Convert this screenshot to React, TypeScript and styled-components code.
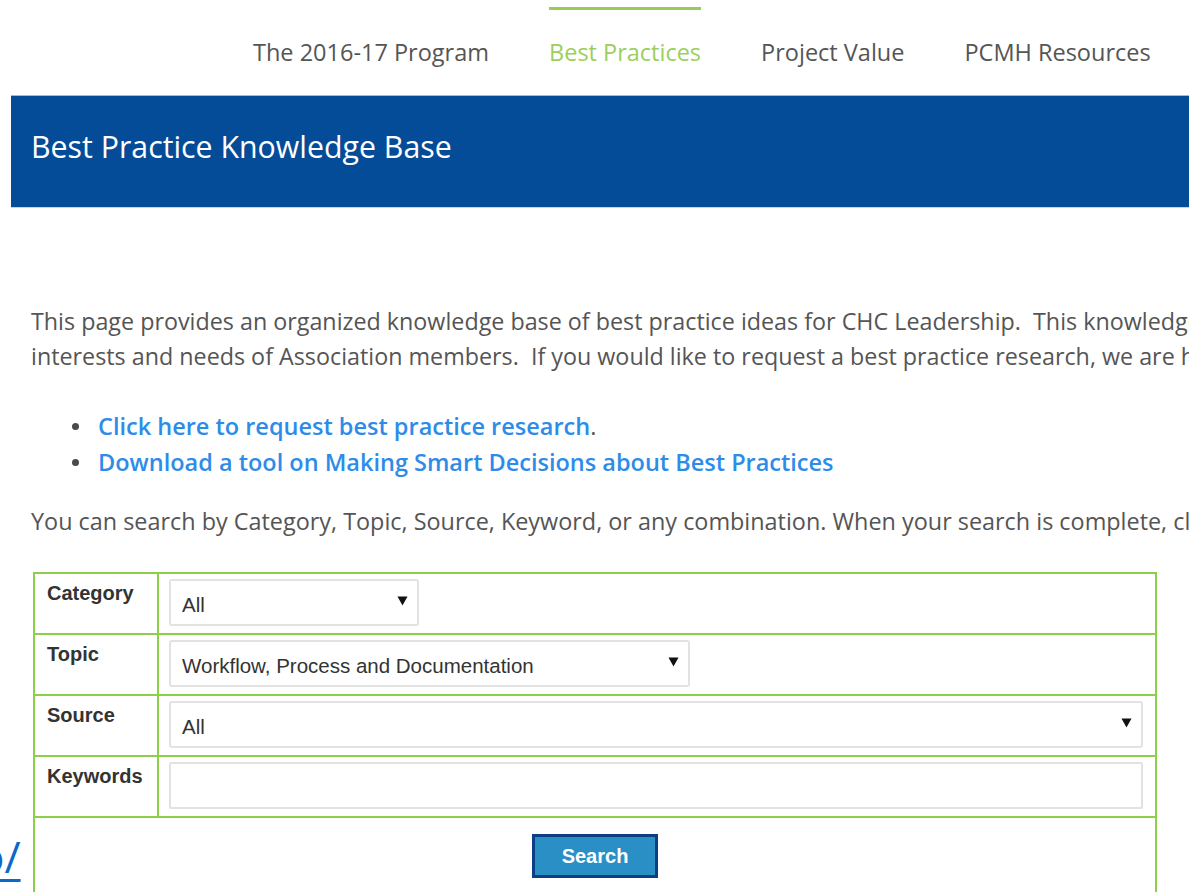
import React from "react";
import styled, { createGlobalStyle } from "styled-components";

const Global = createGlobalStyle`
  html, body {
    margin: 0;
    padding: 0;
    background: #ffffff;
    overflow: hidden;
  }
  body {
    font-family: "Open Sans", "Noto Sans", sans-serif;
    color: #555555;
  }
  * { box-sizing: border-box; }
`;

const Page = styled.div`
  position: relative;
  width: 1189px;
  height: 892px;
  overflow: hidden;
`;

const Nav = styled.nav`
  display: flex;
  gap: 60px;
  padding-left: 253px;
  height: 95px;
  white-space: nowrap;
`;

const NavItem = styled.a<{ $active?: boolean }>`
  display: flex;
  align-items: center;
  padding-top: 9px;
  font-size: 23.5px;
  color: ${(p) => (p.$active ? "#9bcf5c" : "#555555")};
  text-decoration: none;
  border-top: 3px solid ${(p) => (p.$active ? "#97cc55" : "transparent")};
  margin-top: 7px;
  margin-bottom: 10px;
`;

const Banner = styled.header`
  margin-left: 11px;
  width: 1300px;
  height: 113px;
  background: #044c98;
  border-top: 1px solid #a8b9cf;
  border-bottom: 1px solid #c9d2dd;
  display: flex;
  align-items: center;
  padding-left: 20px;
`;

const Title = styled.h1`
  margin: 0;
  font-weight: 400;
  font-size: 30.3px;
  color: #ffffff;
  padding-bottom: 10px;
`;

const Body = styled.main`
  padding-left: 31px;
  width: 1600px;
`;

const Intro = styled.p`
  margin: 96px 0 0;
  font-size: 23.3px;
  line-height: 35px;
  color: #555555;
  white-space: nowrap;
`;

const LinkList = styled.ul`
  margin: 34px 0 0;
  padding-left: 41px;
  list-style: none;
  font-size: 23.5px;
  line-height: 36px;
`;

const LinkItem = styled.li`
  display: flex;
  align-items: center;
  gap: 19px;
  &::before {
    content: "";
    width: 7px;
    height: 7px;
    border-radius: 50%;
    background: #4a4a4a;
    flex: none;
  }
`;

const TextLink = styled.a`
  color: #2e8ce9;
  font-weight: 600;
  text-decoration: none;
`;

const SearchHint = styled.p`
  margin: 23px 0 0;
  font-size: 23.4px;
  line-height: 36px;
  white-space: nowrap;
`;

const FormTable = styled.table`
  margin: 33px 0 0 2px;
  width: 1124px;
  border-collapse: collapse;
  font-family: "Liberation Sans", Arial, sans-serif;
  border: 2px solid #8ccf48;
`;

const Row = styled.tr`
  height: 61px;
`;

const LabelCell = styled.th`
  width: 124px;
  border: 2px solid #8ccf48;
  padding: 8px 8px 0 12px;
  vertical-align: top;
  text-align: left;
  font-size: 20px;
  font-weight: 700;
  color: #333333;
`;

const FieldCell = styled.td`
  border: 2px solid #8ccf48;
  padding: 5px 12px 7px 10px;
  vertical-align: top;
`;

const ButtonCell = styled.td`
  border: 2px solid #8ccf48;
  padding: 16px 0 20px;
  text-align: center;
`;

const SelectWrap = styled.div<{ $width?: number }>`
  position: relative;
  width: ${(p) => (p.$width ? `${p.$width}px` : "100%")};
  height: 47px;
`;

const Select = styled.select`
  appearance: none;
  -webkit-appearance: none;
  width: 100%;
  height: 100%;
  border: 2px solid #e2e2e2;
  border-radius: 3px;
  background: #ffffff;
  padding: 3px 0 0 11px;
  font-family: "Liberation Sans", Arial, sans-serif;
  font-size: 20.5px;
  color: #333333;
  outline: none;
`;

const Arrow = styled.svg`
  position: absolute;
  right: 11px;
  top: 17px;
  width: 11px;
  height: 10px;
  pointer-events: none;
`;

const TextInput = styled.input`
  display: block;
  width: 100%;
  height: 47px;
  border: 2px solid #e2e2e2;
  border-radius: 2px;
  font-family: "Liberation Sans", Arial, sans-serif;
  font-size: 20px;
  outline: none;
`;

const SearchButton = styled.button`
  width: 126px;
  height: 44px;
  background: #2a8fc5;
  border: 3px solid #0b3e82;
  color: #ffffff;
  font-family: "Liberation Sans", Arial, sans-serif;
  font-weight: 700;
  font-size: 20px;
  padding: 0;
`;

const EdgeLink = styled.a`
  position: absolute;
  left: -22px;
  top: 826px;
  font-size: 44px;
  line-height: 60px;
  color: #0b6ac8;
  text-decoration: underline;
  text-decoration-thickness: 3px;
  text-underline-offset: 6px;
`;

const DownArrow = () => (
  <Arrow viewBox="0 0 11 10">
    <path d="M0.5 0.5 H10.5 L5.5 9.5 Z" fill="#111111" />
  </Arrow>
);

type Field = { label: string; value: string; width?: number };

const fields: Field[] = [
  { label: "Category", value: "All", width: 250 },
  { label: "Topic", value: "Workflow, Process and Documentation", width: 521 },
  { label: "Source", value: "All" },
];

export default function App() {
  return (
    <Page>
      <Global />
      <Nav>
        <NavItem href="#">The 2016-17 Program</NavItem>
        <NavItem href="#" $active>
          Best Practices
        </NavItem>
        <NavItem href="#">Project Value</NavItem>
        <NavItem href="#">PCMH Resources</NavItem>
      </Nav>
      <Banner>
        <Title>Best Practice Knowledge Base</Title>
      </Banner>
      <Body>
        <Intro>
          This page provides an organized knowledge base of best practice ideas for CHC Leadership.&nbsp; This
          knowledge base is built around the
          <br />
          interests and needs of Association members.&nbsp; If you would like to request a best practice research, we
          are happy to help.
        </Intro>
        <LinkList>
          <LinkItem>
            <span>
              <TextLink href="#">Click here to request best practice research</TextLink>.
            </span>
          </LinkItem>
          <LinkItem>
            <TextLink href="#">Download a tool on Making Smart Decisions about Best Practices</TextLink>
          </LinkItem>
        </LinkList>
        <SearchHint>
          You can search by Category, Topic, Source, Keyword, or any combination. When your search is complete, click
          on a result.
        </SearchHint>
        <FormTable>
          <tbody>
            {fields.map((f) => (
              <Row key={f.label}>
                <LabelCell>{f.label}</LabelCell>
                <FieldCell>
                  <SelectWrap $width={f.width}>
                    <Select defaultValue={f.value}>
                      <option>{f.value}</option>
                    </Select>
                    <DownArrow />
                  </SelectWrap>
                </FieldCell>
              </Row>
            ))}
            <Row>
              <LabelCell>Keywords</LabelCell>
              <FieldCell>
                <TextInput type="text" />
              </FieldCell>
            </Row>
            <tr>
              <ButtonCell colSpan={2}>
                <SearchButton type="button">Search</SearchButton>
              </ButtonCell>
            </tr>
          </tbody>
        </FormTable>
      </Body>
      <EdgeLink href="#">o/</EdgeLink>
    </Page>
  );
}
